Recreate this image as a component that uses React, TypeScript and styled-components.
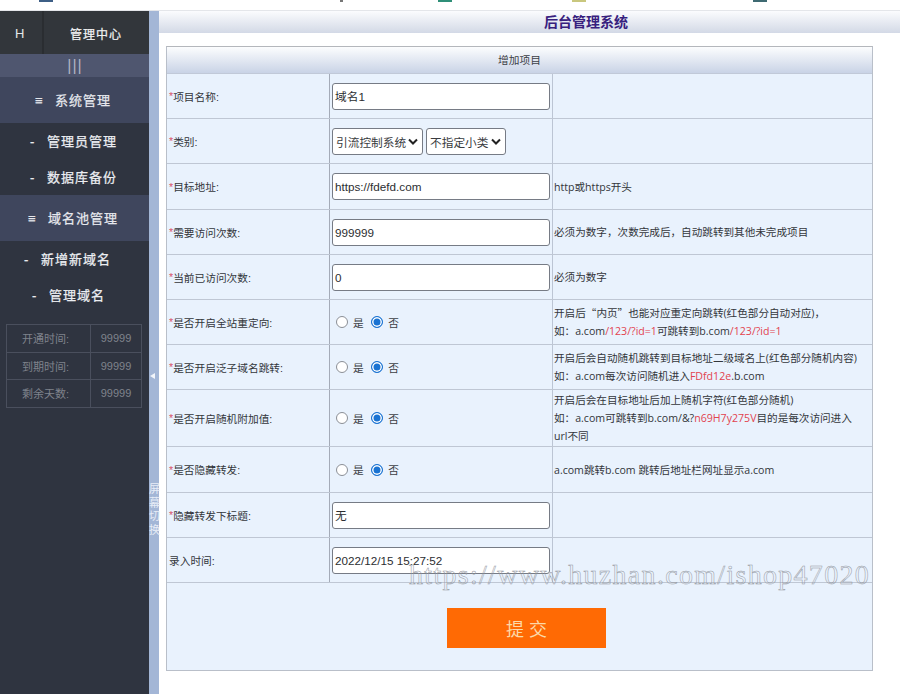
import React from "react";
import styled, { createGlobalStyle } from "styled-components";

const Global = createGlobalStyle`
  html, body { margin: 0; padding: 0; background: #fff; }
  body { width: 900px; height: 694px; overflow: hidden; font-family: "Liberation Sans", "Noto Sans CJK SC", sans-serif; }
`;

const Page = styled.div`
  position: relative;
  width: 900px;
  height: 694px;
  display: flex;
  flex-direction: column;
  overflow: hidden;
`;
const TopStrip = styled.div`
  height: 10px;
  flex: none;
  display: flex;
  background: #fff;
  border-bottom: 1px solid #e4e6ea;
`;
const TabTip = styled.i<{ $c: string; $l: number; $w?: number }>`
  display: block;
  width: ${(p) => p.$w ?? 14}px;
  height: 2px;
  margin-left: ${(p) => p.$l}px;
  background: ${(p) => p.$c};
`;
const Body = styled.div`
  flex: 1;
  display: flex;
  min-height: 0;
`;
const Sidebar = styled.aside`
  width: 149px;
  flex: none;
  background: #2f3440;
  display: flex;
  flex-direction: column;
  color: #eef0f4;
`;
const Brand = styled.div`
  height: 43px;
  display: flex;
  background: #32363b;
`;
const BrandH = styled.div`
  width: 44px;
  border-right: 2px solid #2a2d31;
  font-size: 13px;
  color: #e4e6e8;
  padding-left: 15px;
  box-sizing: border-box;
  line-height: 45px;
`;
const BrandName = styled.div`
  flex: 1;
  padding-left: 26px;
  font-size: 12px;
  letter-spacing: 1px;
  line-height: 48px;
  color: #f0f1f2;
  -webkit-text-stroke: 0.25px #f0f1f2;
`;
const Toggle = styled.div`
  height: 23px;
  background: #4f566f;
  color: #aeb3c2;
  text-align: center;
  font-size: 16px;
  line-height: 24px;
  letter-spacing: 1px;
  padding-left: 1px;
  box-sizing: border-box;
`;
const Group = styled.div<{ $pad: number }>`
  height: 46px;
  background: #3f465d;
  font-size: 13px;
  letter-spacing: 1px;
  line-height: 48px;
  padding-left: ${(p) => p.$pad}px;
  white-space: nowrap;
  color: #e6e8ed;
  -webkit-text-stroke: 0.25px #e6e8ed;
`;
const Item = styled.div<{ $pad: number }>`
  height: 35.5px;
  line-height: 35.5px;
  font-size: 13px;
  letter-spacing: 1px;
  padding-left: ${(p) => p.$pad}px;
  white-space: nowrap;
  color: #eceef2;
  -webkit-text-stroke: 0.25px #eceef2;
`;
const Mark = styled.span<{ $w: number }>`
  display: inline-block;
  width: ${(p) => p.$w}px;
`;
const Items = styled.div<{ $top: number }>`
  box-sizing: border-box;
  height: ${(p) => 71 + p.$top}px;
  padding-top: ${(p) => p.$top}px;
`;
const Stats = styled.table`
  margin: 11px 0 0 6px;
  width: 136px;
  border-collapse: collapse;
  font-size: 11px;
  color: #7f838c;
  td {
    border: 1px solid #4a4f5d;
    height: 27.5px;
    box-sizing: border-box;
    padding: 0;
    text-align: center;
  }
  td:first-child {
    width: 84px;
    text-align: left;
    padding-left: 15px;
  }
`;
const Splitter = styled.div`
  position: relative;
  width: 10px;
  flex: none;
  background: #a3b6d6;
`;
const Arrow = styled.div`
  position: absolute;
  left: 1px;
  top: 362px;
  width: 0;
  height: 0;
  border-top: 3.5px solid transparent;
  border-bottom: 3.5px solid transparent;
  border-right: 5px solid #f2f5fa;
`;
const SplitText = styled.div`
  position: absolute;
  left: 0;
  top: 472px;
  width: 10px;
  font-size: 11px;
  line-height: 13.5px;
  color: #e8edf6;
`;
const Main = styled.main`
  flex: 1;
  min-width: 0;
  display: flex;
  flex-direction: column;
`;
const Title = styled.h1`
  margin: 0;
  height: 22px;
  flex: none;
  background: linear-gradient(#fbfcfe, #d3d9e6);
  text-align: center;
  font-size: 14px;
  line-height: 23px;
  font-weight: 700;
  color: #37207e;
  padding-left: 113px;
  box-sizing: border-box;
  width: 741px;
`;
const Card = styled.div`
  width: 707px;
  margin: 13px 0 0 7px;
  border: 1px solid #b9bfc9;
  border-top-color: #b4b7bc;
  box-sizing: border-box;
  height: 625px;
  background: #e9f2fd;
  display: flex;
  flex-direction: column;
`;
const CardHead = styled.div`
  height: 27px;
  flex: none;
  box-sizing: border-box;
  background: linear-gradient(#fcfdfe, #c9d3e6);
  text-align: center;
  font-size: 10.7px;
  line-height: 27px;
  color: #3c4046;
  border-bottom: 1px solid #c1c9d8;
`;
const Row = styled.div<{ $h: number }>`
  display: grid;
  grid-template-columns: 163px 223px 1fr;
  height: ${(p) => p.$h}px;
  box-sizing: border-box;
  border-bottom: 1px solid #bfc7d4;
`;
const LabelCell = styled.div`
  display: flex;
  align-items: center;
  padding-left: 2px;
  font-size: 10.7px;
  color: #33363b;
  border-right: 1px solid #a4abb8;
  white-space: nowrap;
`;
const Star = styled.span`
  color: #d8556b;
`;
const FieldCell = styled.div`
  display: flex;
  align-items: center;
  gap: 3px;
  padding-left: 2px;
  border-right: 1px solid #bcc5d4;
`;
const NoteCell = styled.div`
  display: flex;
  flex-direction: column;
  justify-content: center;
  padding-left: 1px;
  font-family: "Open Sans", "Noto Sans CJK SC", sans-serif;
  font-size: 10.6px;
  line-height: 18px;
  color: #33363b;
  white-space: nowrap;
`;
const Red = styled.span`
  color: #e2434f;
`;
const Quote = styled.span`
  font-family: "Noto Sans CJK SC", sans-serif;
`;
const TextInput = styled.div`
  width: 218px;
  height: 27px;
  box-sizing: border-box;
  background: #fff;
  border: 1px solid #767b85;
  border-radius: 3px;
  font-size: 11.7px;
  line-height: 25px;
  padding-left: 2px;
  color: #2c2e31;
`;
const SelectBox = styled.div<{ $w: number }>`
  width: ${(p) => p.$w}px;
  height: 27px;
  box-sizing: border-box;
  background: #fff;
  border: 1px solid #767b85;
  border-radius: 3px;
  font-size: 11.7px;
  padding: 0 4px 0 3px;
  display: flex;
  align-items: center;
  justify-content: space-between;
  color: #3a3c40;
`;
const Radios = styled.div`
  display: flex;
  align-items: center;
  padding-left: 4px;
  font-size: 10.7px;
  color: #3d4045;
`;
const RadioDot = styled.span<{ $on?: boolean }>`
  width: 12px;
  height: 12px;
  border-radius: 50%;
  box-sizing: border-box;
  background: ${(p) => (p.$on ? "#1a73d2" : "#fff")};
  border: 1px solid ${(p) => (p.$on ? "#1a73d2" : "#8b8f96")};
  box-shadow: ${(p) => (p.$on ? "inset 0 0 0 1.5px #fff" : "none")};
  margin-right: 5px;
`;
const RadioText = styled.span`
  margin-right: 7.5px;
`;
const Submit = styled.div`
  flex: 1;
  padding: 25px 0 0 280px;
`;
const SubmitButton = styled.button`
  display: block;
  width: 159px;
  height: 40px;
  padding: 0;
  background: #ff6a04;
  border: 0;
  color: #fcd9a8;
  font: 400 18px "Liberation Sans", "Noto Sans CJK SC", sans-serif;
`;
const Watermark = styled.div`
  position: absolute;
  left: 409px;
  top: 560px;
  font-family: "Liberation Serif", serif;
  font-size: 28px;
  line-height: 30px;
  letter-spacing: 1.3px;
  white-space: nowrap;
  color: transparent;
  -webkit-text-stroke: 0.5px #94989f;
`;

const Chevron = () => (
  <svg width="10" height="7" viewBox="0 0 10 7" fill="none" stroke="#222" strokeWidth="2">
    <path d="M1 1.5l4 4 4-4" />
  </svg>
);

const Radio = () => (
  <Radios>
    <RadioDot />
    <RadioText>是</RadioText>
    <RadioDot $on />
    <span>否</span>
  </Radios>
);

const Label = ({ text, star = true }: { text: string; star?: boolean }) => (
  <LabelCell>
    {star && <Star>*</Star>}
    {text}
  </LabelCell>
);

export default function App() {
  return (
    <Page>
      <Global />
      <TopStrip>
        <TabTip $c="#3e5f86" $l={39} />
        <TabTip $c="#777" $l={287} $w={3} />
        <TabTip $c="#2f8f78" $l={95} />
        <TabTip $c="#c9c77e" $l={120} />
        <TabTip $c="#3e6a72" $l={167} />
      </TopStrip>
      <Body>
        <Sidebar>
          <Brand>
            <BrandH>H</BrandH>
            <BrandName>管理中心</BrandName>
          </Brand>
          <Toggle>|||</Toggle>
          <Group $pad={35}><Mark $w={20}>≡</Mark>系统管理</Group>
          <Items $top={1}>
            <Item $pad={30}><Mark $w={17}>-</Mark>管理员管理</Item>
            <Item $pad={30}><Mark $w={17}>-</Mark>数据库备份</Item>
          </Items>
          <Group $pad={28}><Mark $w={20}>≡</Mark>域名池管理</Group>
          <Items $top={1}>
            <Item $pad={24}><Mark $w={17}>-</Mark>新增新域名</Item>
            <Item $pad={32}><Mark $w={17}>-</Mark>管理域名</Item>
          </Items>
          <Stats>
            <tbody>
              <tr><td>开通时间:</td><td>99999</td></tr>
              <tr><td>到期时间:</td><td>99999</td></tr>
              <tr><td>剩余天数:</td><td>99999</td></tr>
            </tbody>
          </Stats>
        </Sidebar>
        <Splitter>
          <Arrow />
          <SplitText>屏幕切换</SplitText>
        </Splitter>
        <Main>
          <Title>后台管理系统</Title>
          <Card>
            <CardHead>增加项目</CardHead>
            <Row $h={45}>
              <Label text="项目名称:" />
              <FieldCell><TextInput>域名1</TextInput></FieldCell>
              <NoteCell />
            </Row>
            <Row $h={45}>
              <Label text="类别:" />
              <FieldCell>
                <SelectBox $w={91}>引流控制系统<Chevron /></SelectBox>
                <SelectBox $w={80}>不指定小类<Chevron /></SelectBox>
              </FieldCell>
              <NoteCell />
            </Row>
            <Row $h={46}>
              <Label text="目标地址:" />
              <FieldCell><TextInput>https://fdefd.com</TextInput></FieldCell>
              <NoteCell>http或https开头</NoteCell>
            </Row>
            <Row $h={45}>
              <Label text="需要访问次数:" />
              <FieldCell><TextInput>999999</TextInput></FieldCell>
              <NoteCell>必须为数字，次数完成后，自动跳转到其他未完成项目</NoteCell>
            </Row>
            <Row $h={45}>
              <Label text="当前已访问次数:" />
              <FieldCell><TextInput>0</TextInput></FieldCell>
              <NoteCell>必须为数字</NoteCell>
            </Row>
            <Row $h={45}>
              <Label text="是否开启全站重定向:" />
              <FieldCell><Radio /></FieldCell>
              <NoteCell>
                <div>开启后<Quote>“</Quote>内页<Quote>”</Quote>也能对应重定向跳转(红色部分自动对应)，</div>
                <div>如：a.com<Red>/123/?id=1</Red>可跳转到b.com<Red>/123/?id=1</Red></div>
              </NoteCell>
            </Row>
            <Row $h={45}>
              <Label text="是否开启泛子域名跳转:" />
              <FieldCell><Radio /></FieldCell>
              <NoteCell>
                <div>开启后会自动随机跳转到目标地址二级域名上(红色部分随机内容)</div>
                <div>如：a.com每次访问随机进入<Red>FDfd12e</Red>.b.com</div>
              </NoteCell>
            </Row>
            <Row $h={57}>
              <Label text="是否开启随机附加值:" />
              <FieldCell><Radio /></FieldCell>
              <NoteCell>
                <div>开启后会在目标地址后加上随机字符(红色部分随机)</div>
                <div>如：a.com可跳转到b.com/&?<Red>n69H7y275V</Red>目的是每次访问进入</div>
                <div>url不同</div>
              </NoteCell>
            </Row>
            <Row $h={46}>
              <Label text="是否隐藏转发:" />
              <FieldCell><Radio /></FieldCell>
              <NoteCell>a.com跳转b.com 跳转后地址栏网址显示a.com</NoteCell>
            </Row>
            <Row $h={45}>
              <Label text="隐藏转发下标题:" />
              <FieldCell><TextInput>无</TextInput></FieldCell>
              <NoteCell />
            </Row>
            <Row $h={45}>
              <Label text="录入时间:" star={false} />
              <FieldCell><TextInput>2022/12/15 15:27:52</TextInput></FieldCell>
              <NoteCell />
            </Row>
            <Submit><SubmitButton>提 交</SubmitButton></Submit>
          </Card>
        </Main>
      </Body>
      <Watermark>https://www.huzhan.com/ishop47020</Watermark>
    </Page>
  );
}
